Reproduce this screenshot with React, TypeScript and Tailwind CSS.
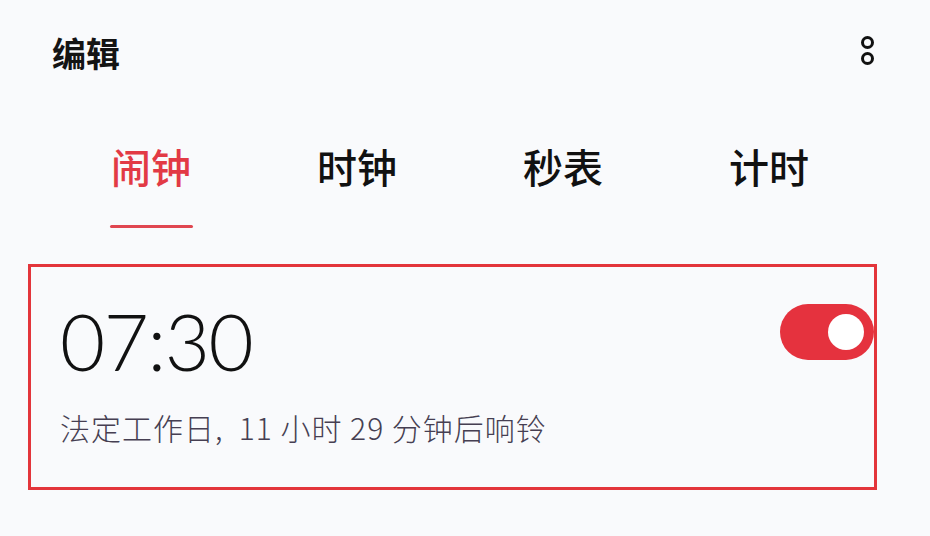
import { useState } from 'react'

const tabs = ['闹钟', '时钟', '秒表', '计时']

const cjk = { fontFamily: '"Noto Sans CJK SC", "Noto Sans", sans-serif' }

export default function App() {
  const [active, setActive] = useState(0)
  const [on, setOn] = useState(true)

  return (
    <div className="w-[930px] h-[536px] bg-[#f9fafc] overflow-hidden" style={cjk}>
      {/* Header */}
      <div className="flex items-center justify-between pl-[52px] pr-[56px] pt-[26px] h-[80px]">
        <h1 className="text-[34px] leading-[40px] font-bold text-[#141414]">编辑</h1>
        <button className="flex flex-col items-center gap-[3px] -mt-[6px]">
          <span className="w-[13px] h-[13px] rounded-full border-[3px] border-[#111]" />
          <span className="w-[13px] h-[13px] rounded-full border-[3px] border-[#111]" />
        </button>
      </div>

      {/* Tabs */}
      <div className="ml-[48px] w-[824px] grid grid-cols-4 mt-[62px]">
        {tabs.map((t, i) => (
          <button key={t} onClick={() => setActive(i)} className="flex flex-col items-center">
            <span
              className={`text-[40px] leading-[48px] font-medium ${
                i === active ? 'text-[#e23a45]' : 'text-[#111]'
              }`}
            >
              {t}
            </span>
            <span
              className={`mt-[35px] h-[3px] w-[83px] rounded-full ${
                i === active ? 'bg-[#e04650]' : 'bg-transparent'
              }`}
            />
          </button>
        ))}
      </div>

      {/* Alarm card */}
      <div className="ml-[28px] mt-[36px] w-[849px] h-[226px] border-[3px] border-[#e3353b] flex justify-between">
        <div className="pl-[29px] pt-[34px]">
          <div
            className="text-[78px] leading-[80px] font-light text-[#111] tracking-[-1.5px]"
            style={{ fontFamily: 'Lato, "Noto Sans", sans-serif' }}
          >
            07:30
          </div>
          <div className="mt-[26px] text-[30px] leading-[40px] font-light text-[#463f52] tracking-[1px]">
            法定工作日,&nbsp; 11 小时 29 分钟后响铃
          </div>
        </div>
        <div className="pt-[37px]">
          <button
            onClick={() => setOn(!on)}
            className={`w-[94px] h-[56px] rounded-full flex items-center px-[10px] ${
              on ? 'bg-[#e5323e] justify-end' : 'bg-[#d4d4d8] justify-start'
            }`}
          >
            <span className="w-[36px] h-[36px] rounded-full bg-white" />
          </button>
        </div>
      </div>
    </div>
  )
}
